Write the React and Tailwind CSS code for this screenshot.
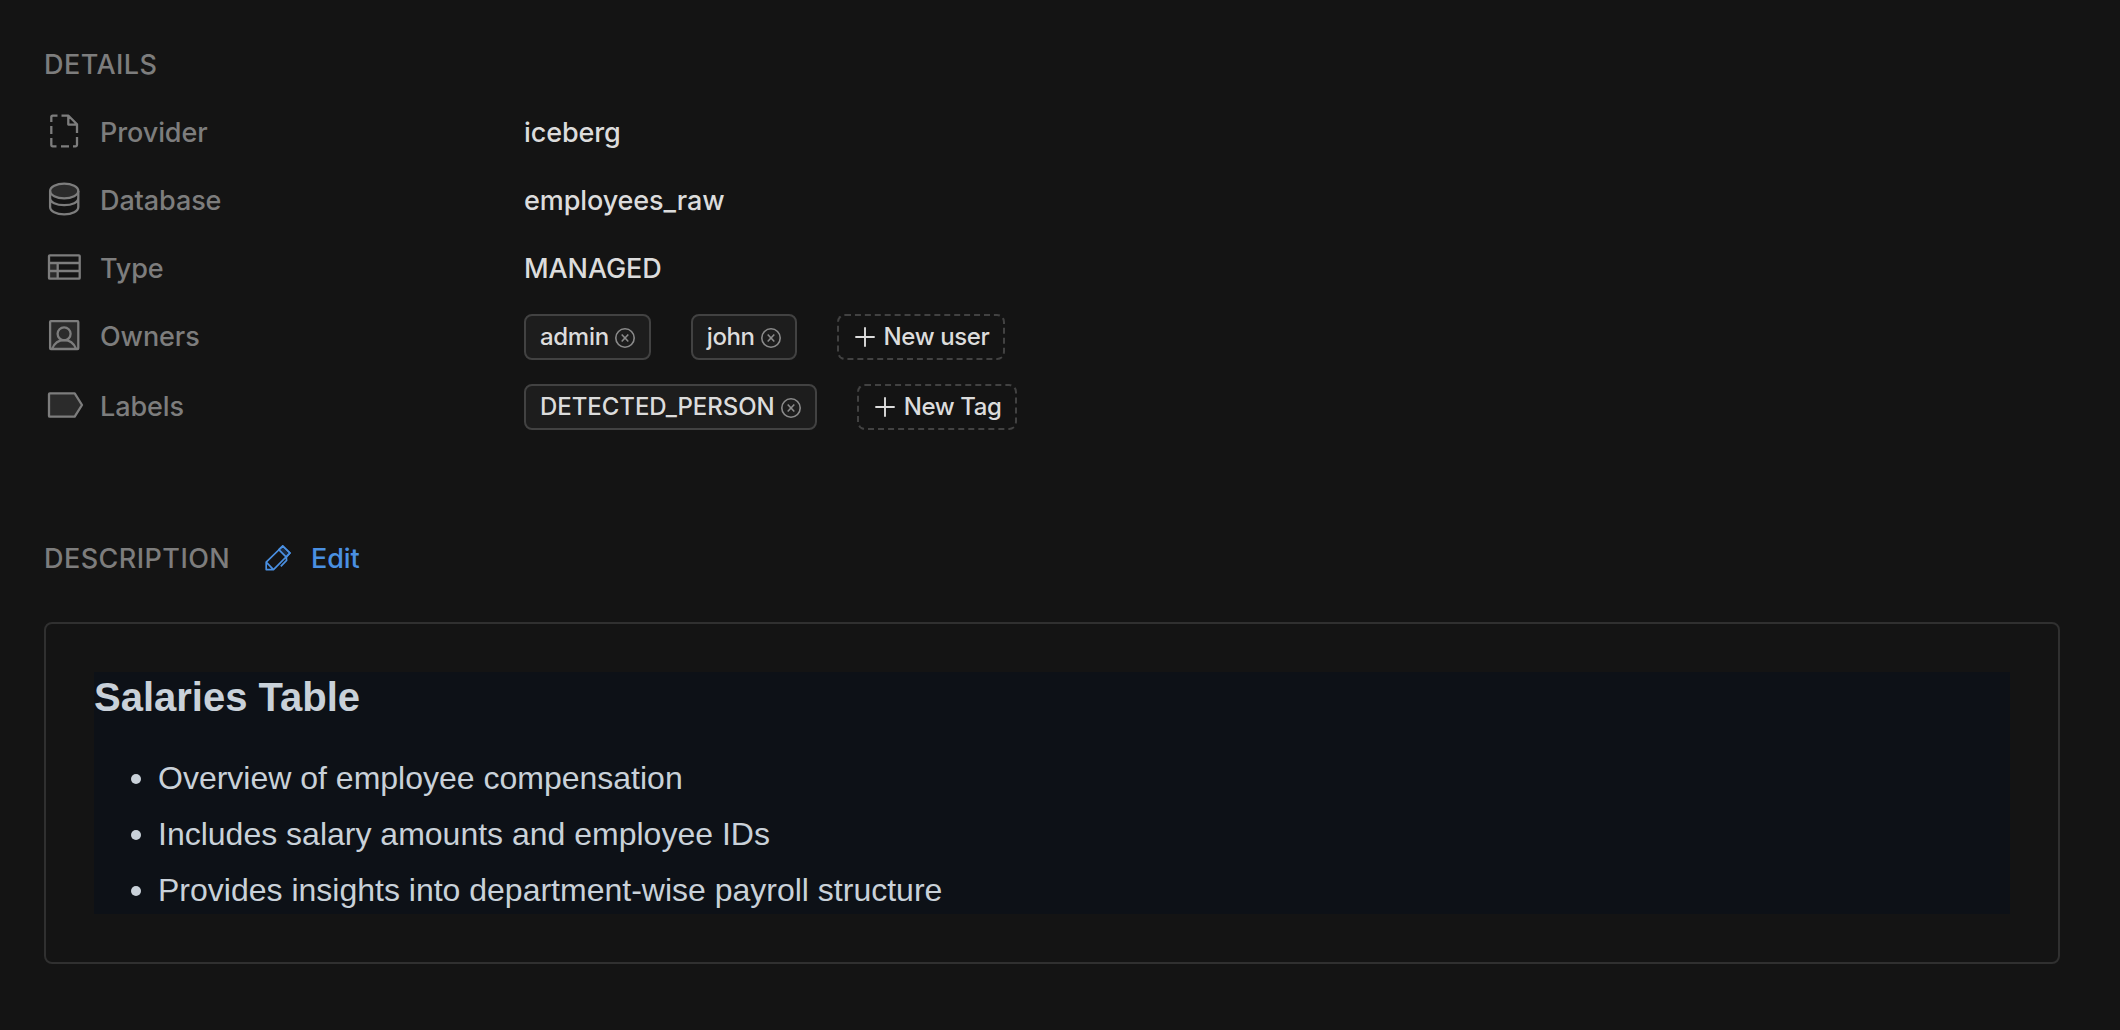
const stroke = { fill: 'none', stroke: 'currentColor', strokeWidth: 2.3, strokeLinejoin: 'round', strokeLinecap: 'butt' };

function Icon({ children }) {
  return (
    <svg className="h-9 w-10 shrink-0 text-[#7d7d7d]" viewBox="0 0 40 36" {...stroke}>
      {children}
    </svg>
  );
}

const ProviderIcon = () => (
  <Icon>
    <path d="M5.3 8V3.2a1.5 1.5 0 0 1 1.5-1.5H11.5M15.5 1.7H22.5L31 10.2V19M22.3 1.7V10.6H31M31 23V30.8a1.5 1.5 0 0 1-1.5 1.5H27M23 32.3H15M10.5 32.3H6.8a1.5 1.5 0 0 1-1.5-1.5V24M5.3 20V12" />
  </Icon>
);

const DatabaseIcon = () => (
  <Icon>
    <ellipse cx="18.2" cy="9" rx="14.1" ry="7.3" fill="#2b2b2b" />
    <path d="M4.1 9V25C4.1 29.2 10.2 32.3 18.2 32.3S32.3 29.2 32.3 25V9M4.1 16C4.1 20.2 10.2 23.2 18.2 23.2S32.3 20.2 32.3 16" />
  </Icon>
);

const TypeIcon = () => (
  <Icon>
    <path d="M3 13H11.7V28.7H3Z" fill="#2b2b2b" stroke="none" />
    <rect x="3" y="5.3" width="30.7" height="23.4" rx="0.8" />
    <path d="M3 13H33.7M3 21H33.7M11.7 13V28.7" />
  </Icon>
);

const OwnersIcon = () => (
  <Icon>
    <rect x="4.1" y="2.1" width="28.2" height="27.9" rx="0.8" fill="#2b2b2b" />
    <circle cx="18.1" cy="14.8" r="6.5" />
    <path d="M6.3 29.7C8.3 24.5 12.8 21.2 18.1 21.2S27.9 24.5 29.9 29.7" />
  </Icon>
);

const LabelsIcon = () => (
  <Icon>
    <path d="M3.8 4.4H28.7L36 16L28.7 27.7H3.8a.8.8 0 0 1-.8-.8V5.2a.8.8 0 0 1 .8-.8Z" fill="#2b2b2b" />
  </Icon>
);

const CloseIcon = () => (
  <svg className="ml-1.5 mt-px size-5 shrink-0 text-[#8a8a8a]" viewBox="0 0 20 20" {...stroke} strokeWidth="1.6">
    <circle cx="10" cy="10" r="9.2" />
    <path d="M6.7 6.5L13.3 13.5M13.3 6.5L6.7 13.5" />
  </svg>
);

const PlusIcon = () => (
  <svg className="mr-[9px] size-5 shrink-0" viewBox="0 0 20 20" {...stroke} strokeWidth="1.9">
    <path d="M10 .3V19.7M.3 10H19.7" />
  </svg>
);

const PencilIcon = () => (
  <svg className="size-[26px] shrink-0" viewBox="0 0 26 26" {...stroke} strokeWidth="1.7">
    <path d="M13.8 4.6L17.8 1L25 8L21.3 12.1Z" fill="#1c2b40" />
    <path d="M1.2 17.2L17.8 1L25 8L8.5 24.6H1.2ZM1.2 17.2L8.5 24.6M21.3 12.1L21.6 15.4L15.8 21.3" />
  </svg>
);

function Tag({ children }) {
  return (
    <span className="flex h-[46px] items-center rounded-lg border-2 border-[#424242] bg-[#1d1d1d] px-3.5 text-2xl text-[#dcdcdc]">
      {children}
      <CloseIcon />
    </span>
  );
}

function NewTag({ children }) {
  return (
    <button className="flex h-[46px] items-center rounded-lg border-2 border-dashed border-[#424242] pl-4 pr-3.5 text-2xl tracking-[-0.4px] text-[#dcdcdc]">
      <PlusIcon />
      {children}
    </button>
  );
}

function Field({ icon, label, value }) {
  return (
    <div className="flex h-11 items-center leading-10">
      <div className="flex w-[478px] items-center text-[#7d7d7d]">
        {icon}
        <span className="ml-3.5 pt-0.5">{label}</span>
      </div>
      <span className="pt-0.5 text-[#dcdcdc]">{value}</span>
    </div>
  );
}

function TagField({ icon, label, children }) {
  return (
    <div className="flex items-center">
      <div className="flex w-[478px] items-center text-[#7d7d7d]">
        {icon}
        <span className="ml-3.5">{label}</span>
      </div>
      <div className="flex items-center gap-10">{children}</div>
    </div>
  );
}

function Bullet({ children }) {
  return (
    <li className="flex items-center gap-[17px]">
      <span className="mt-0.5 size-2.5 rounded-full bg-[#c9d1d9]" />
      {children}
    </li>
  );
}

export default function App() {
  return (
    <main className="min-h-screen w-full bg-[#141414] pl-11 pr-[60px] pt-[43px] font-['Inter',sans-serif] text-[27px] leading-[44px] font-[450] tracking-[-0.1px]">
      <h2 className="font-[550] tracking-[0.45px] text-[#7d7d7d]">DETAILS</h2>
      <div className="mt-[23px] flex flex-col gap-6 pl-0.5">
        <Field icon={<ProviderIcon />} label="Provider" value="iceberg" />
        <Field icon={<DatabaseIcon />} label="Database" value="employees_raw" />
        <Field icon={<TypeIcon />} label="Type" value="MANAGED" />
        <TagField icon={<OwnersIcon />} label="Owners">
          <Tag><span className="tracking-[-0.3px]">admin</span></Tag>
          <Tag><span className="tracking-[-0.4px]">john</span></Tag>
          <NewTag>New user</NewTag>
        </TagField>
        <TagField icon={<LabelsIcon />} label="Labels">
          <Tag><span className="tracking-[-0.05px]">DETECTED_PERSON</span></Tag>
          <NewTag>New Tag</NewTag>
        </TagField>
      </div>
      <div className="mt-[106px] flex h-11 items-center leading-10">
        <h2 className="w-[221px] pt-0.5 font-[550] tracking-[0.45px] text-[#7d7d7d]">DESCRIPTION</h2>
        <button className="flex items-center gap-5 text-[#4a90e2]">
          <PencilIcon />
          <span className="pt-0.5">Edit</span>
        </button>
      </div>
      <section className="mt-[42px] rounded-lg border-2 border-[#303030] p-12">
        <article className="bg-[#0d1117] font-['Liberation_Sans',sans-serif] text-[32px] leading-[48px] font-normal tracking-normal text-[#c9d1d9]">
          <h3 className="mb-8 text-[40px] font-bold leading-[50px]">Salaries Table</h3>
          <ul className="flex flex-col gap-2 pl-[37px]">
            <Bullet>Overview of employee compensation</Bullet>
            <Bullet>Includes salary amounts and employee IDs</Bullet>
            <Bullet>Provides insights into department-wise payroll structure</Bullet>
          </ul>
        </article>
      </section>
    </main>
  );
}
